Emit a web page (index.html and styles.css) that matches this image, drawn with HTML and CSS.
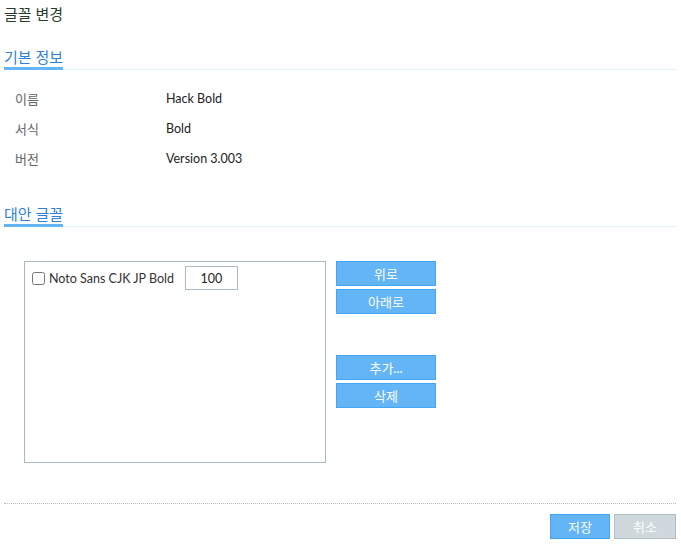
FILE: index.html
```html
<!DOCTYPE html>
<html lang="ko">
<head>
  <meta charset="UTF-8">
  <title>글꼴 변경</title>
  <link rel="stylesheet" href="styles.css">
</head>
<body>
  <div class="dialog">
    <h1 class="title">글꼴 변경</h1>

    <div class="section">
      <h2 class="section-head"><span>기본 정보</span></h2>
      <div class="info">
        <div class="info-row"><span class="label">이름</span><span class="value">Hack Bold</span></div>
        <div class="info-row"><span class="label">서식</span><span class="value">Bold</span></div>
        <div class="info-row"><span class="label">버전</span><span class="value">Version 3.003</span></div>
      </div>
    </div>

    <div class="section">
      <h2 class="section-head"><span>대안 글꼴</span></h2>
      <div class="fallback">
        <div class="font-list">
          <div class="font-item">
            <label><input type="checkbox"> Noto Sans CJK JP Bold</label>
            <input class="scale" type="text" value="100">
          </div>
        </div>
        <div class="side-buttons">
          <div class="btn-group">
            <button class="btn">위로</button>
            <button class="btn">아래로</button>
          </div>
          <div class="btn-group">
            <button class="btn">추가...</button>
            <button class="btn">삭제</button>
          </div>
        </div>
      </div>
    </div>

    <div class="footer">
      <button class="btn btn-save">저장</button>
      <button class="btn btn-cancel">취소</button>
    </div>
  </div>
</body>
</html>
```

FILE: styles.css
```css
body {
  margin: 0;
  font-family: Lato, "Noto Sans CJK KR", sans-serif;
  font-size: 12.5px;
  color: #222;
  background: #fff;
}
.dialog {
  padding: 4px 5px 0 4px;
}
.title {
  margin: 0;
  font-size: 15px;
  font-weight: normal;
  line-height: 20px;
  color: #2b3b2b;
}
.section-head {
  margin: 0;
  font-size: 15px;
  font-weight: normal;
  line-height: 20px;
  color: #2f80d8;
  border-bottom: 1px solid #e3f0fb;
}
.section:first-of-type .section-head {
  margin-top: 23px;
}
.section-head span {
  display: inline-block;
  border-bottom: 3px solid #64b5f6;
  margin-bottom: -1px;
}
.info {
  padding: 13px 0 0 11px;
}
.info-row {
  display: flex;
  height: 30px;
  align-items: center;
}
.label {
  width: 151px;
  font-size: 13px;
  color: #666;
}
.value {
  color: #222;
}
.section + .section .section-head {
  margin-top: 31px;
}
.fallback {
  display: flex;
  gap: 10px;
  padding: 34px 0 0 20px;
}
.font-list {
  width: 302px;
  height: 202px;
  border: 1px solid #aabbc5;
  padding: 4px 6px;
  box-sizing: border-box;
}
.font-item {
  display: flex;
  align-items: center;
  gap: 11px;
}
.font-item label {
  display: flex;
  align-items: center;
  gap: 4px;
  color: #333;
}
.font-item input[type="checkbox"] {
  width: 13px;
  height: 13px;
  margin: 0 0 0 1px;
}
.scale {
  width: 53px;
  height: 24px;
  box-sizing: border-box;
  border: 1px solid #aabbc5;
  text-align: center;
  font: inherit;
  color: #222;
  padding: 0;
}
.side-buttons {
  display: flex;
  flex-direction: column;
  gap: 41px;
}
.btn-group {
  display: flex;
  flex-direction: column;
  gap: 3px;
}
.btn {
  width: 100px;
  height: 25px;
  background: #64b5f6;
  border: 1px solid #42a5f5;
  color: #fff;
  font: inherit;
  font-size: 13px;
  padding: 0;
  cursor: pointer;
}
.footer {
  margin-top: 40px;
  border-top: 1px dotted #bbb;
  padding-top: 10px;
  display: flex;
  justify-content: flex-end;
  gap: 4px;
}
.btn-save {
  width: 60px;
}
.btn-cancel {
  width: 62px;
  background: #cfd8dc;
  border-color: #b0bec5;
}
```
